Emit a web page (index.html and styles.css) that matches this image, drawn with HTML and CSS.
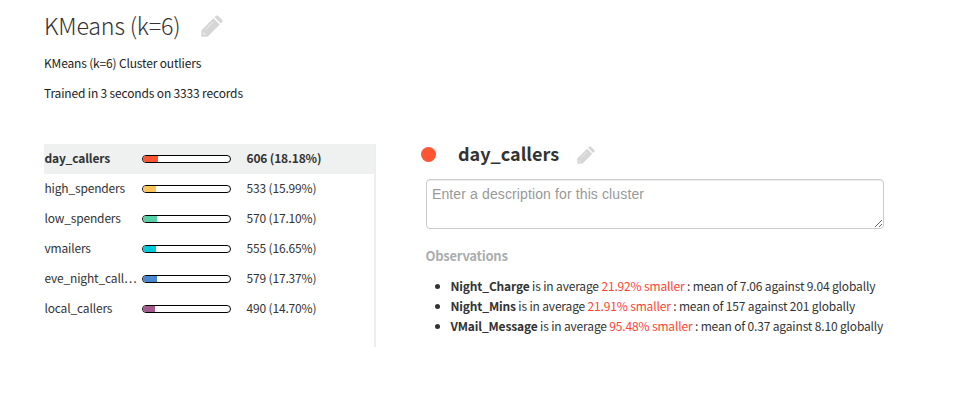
FILE: index.html
```html
<!DOCTYPE html>
<html lang="en">
<head>
<meta charset="utf-8">
<title>KMeans (k=6)</title>
<link rel="stylesheet" href="styles.css">
</head>
<body>
<svg width="0" height="0" class="defs"><symbol id="pencil" viewBox="0 0 22 22"><path d="M0.3 21.7V15.4L12.4 3.3L18.7 9.6L6.6 21.7Z"/><path d="M13.5 2.2L15 .8Q16 0 17 .8L21.2 5Q22 6 21.2 7L19.8 8.5Z"/><path class="tip" d="M1.9 17.2L4.8 20.1H3.3V18.7H1.9Z"/><path class="cut" d="M4.6 14.6L12.2 7"/></symbol></svg>
<header class="header">
  <div class="title-row"><h1>KMeans (k=6)</h1><svg class="pencil large"><use href="#pencil"/></svg></div>
  <p>KMeans (k=6) Cluster outliers</p>
  <p>Trained in 3 seconds on 3333 records</p>
</header>
<main class="content">
  <section class="clusters">
    <div class="row active"><span class="name">day_callers</span><span class="bar"><i class="red" style="width:18.18%"></i></span><span class="count">606 (18.18%)</span></div>
    <div class="row"><span class="name">high_spenders</span><span class="bar"><i class="yellow" style="width:15.99%"></i></span><span class="count">533 (15.99%)</span></div>
    <div class="row"><span class="name">low_spenders</span><span class="bar"><i class="green" style="width:17.10%"></i></span><span class="count">570 (17.10%)</span></div>
    <div class="row"><span class="name">vmailers</span><span class="bar"><i class="cyan" style="width:16.65%"></i></span><span class="count">555 (16.65%)</span></div>
    <div class="row"><span class="name">eve_night_call…</span><span class="bar"><i class="blue" style="width:17.37%"></i></span><span class="count">579 (17.37%)</span></div>
    <div class="row"><span class="name">local_callers</span><span class="bar"><i class="purple" style="width:14.70%"></i></span><span class="count">490 (14.70%)</span></div>
  </section>
  <section class="detail">
    <div class="detail-head"><span class="dot"></span><h2>day_callers</h2><svg class="pencil small"><use href="#pencil"/></svg></div>
    <textarea placeholder="Enter a description for this cluster"></textarea>
    <h3>Observations</h3>
    <ul>
      <li><b>Night_Charge</b> is in average <em>21.92% smaller</em> : mean of 7.06 against 9.04 globally</li>
      <li><b>Night_Mins</b> is in average <em>21.91% smaller</em> : mean of 157 against 201 globally</li>
      <li><b>VMail_Message</b> is in average <em>95.48% smaller</em> : mean of 0.37 against 8.10 globally</li>
    </ul>
  </section>
</main>
</body>
</html>
```
FILE: styles.css
```css
* { box-sizing: border-box; }
body { margin: 0; background: #fff; color: #333; font: 12px/20px "Noto Sans CJK SC", sans-serif; letter-spacing: -.16px; overflow: hidden; }
h1, h2, h3, p, ul { margin: 0; padding: 0; }
.defs { position: absolute; }
.header { padding: 6px 44px 0; }
.title-row { display: flex; height: 40px; align-items: center; }
h1 { width: 157px; font-size: 23.3px; letter-spacing: -.22px; font-weight: 300; line-height: 38px; padding-bottom: 2px; white-space: nowrap; }
.header p { height: 30px; padding-top: 7px; color: #222; white-space: nowrap; }
.pencil { fill: #d6d6d6; flex: none; }
.tip { fill: #fff; }
.cut { fill: none; stroke: #eee; stroke-width: 1; }
.large { width: 22px; height: 22px; }
.small { width: 18px; height: 18px; }
.content { display: flex; padding: 38px 0 0 44px; }
.clusters { width: 332px; height: 203px; border-right: 2px solid #eee; flex: none; }
.row { display: flex; align-items: center; height: 30px; white-space: nowrap; }
.active { background: #eff1f0; font-weight: 700; }
.name { width: 98px; padding: 0 0 2px .4px; }
.bar { width: 89px; height: 8px; border: 1px solid #000; border-radius: 4px; overflow: hidden; background: #fff; }
.bar i { display: block; height: 6px; margin-left: -1px; }
.count { margin-left: 15.5px; padding-bottom: 2px; }
.red, .dot { background: #ff5533; }
.yellow { background: #fdc35c; }
.green { background: #57d0a8; }
.cyan { background: #00cbdc; }
.blue { background: #4a87d1; }
.purple { background: #a45a8d; }
.detail { margin-left: 45px; width: 500px; }
.detail-head { display: flex; height: 21px; align-items: center; }
.dot { width: 15px; height: 15px; border-radius: 50%; margin-right: 22px; }
h2 { width: 119px; font-size: 18px; line-height: 21px; letter-spacing: 0; padding-bottom: 2px; white-space: nowrap; }
textarea { display: block; width: 458px; height: 50px; margin: 14px 0 0 5px; padding: 4px 5px; border: 1px solid #ccc; border-radius: 4px; box-shadow: inset 0 1px 1px rgba(0,0,0,.075); font: 14px/20px "Liberation Sans", sans-serif; letter-spacing: .12px; resize: both; }
textarea::placeholder { color: #999; }
h3 { margin: 17px 0 10px 4.5px; font-size: 13px; line-height: 20px; letter-spacing: -.25px; color: #aaaeaf; }
ul { padding-left: 29.5px; white-space: nowrap; }
em { color: #ff4433; font-style: normal; }
```
